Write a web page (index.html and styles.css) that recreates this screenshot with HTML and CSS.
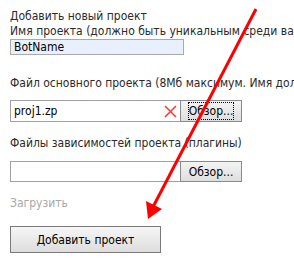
FILE: index.html
```html
<!DOCTYPE html>
<html lang="ru">
<head>
<meta charset="utf-8">
<link rel="stylesheet" href="styles.css">
</head>
<body>
<div class="page">
  <div class="form">
    <div class="line title">Добавить новый проект</div>
    <div class="line">Имя проекта (должно быть уникальным среди ваших ботов)</div>
    <div class="text-input name">BotName</div>
    <div class="line label-file">Файл основного проекта (8Мб максимум. Имя должно быть латиницей)</div>
    <div class="file-row">
      <div class="file-field">proj1.zp<svg class="clear" width="13" height="13" viewBox="0 0 13 13"><path d="M1 1 L12 12 M12 1 L1 12" stroke="#e8443a" stroke-width="1.6" fill="none"/></svg></div>
      <div class="browse focused"><span class="browse-label">Обзор...</span></div>
    </div>
    <div class="line label-deps">Файлы зависимостей проекта (плагины)</div>
    <div class="file-row second">
      <div class="file-field"></div>
      <div class="browse"><span class="browse-label">Обзор...</span></div>
    </div>
    <div class="line upload">Загрузить</div>
    <div class="submit">Добавить проект</div>
  </div>
  <svg class="arrow" width="294" height="268" viewBox="0 0 294 268">
    <line x1="256" y1="9" x2="153" y2="207" stroke="#ff0000" stroke-width="3"/>
    <polygon points="148,219 146,201 162,209" fill="#ff0000"/>
  </svg>
</div>
</body>
</html>
```
FILE: styles.css
```css
html, body {
  margin: 0;
  padding: 0;
  background: #ffffff;
}
body {
  width: 294px;
  height: 268px;
  overflow: hidden;
}
.page {
  position: relative;
  width: 294px;
  height: 268px;
  overflow: hidden;
}
.form {
  padding: 9px 0 0 10px;
  font-family: "DejaVu Sans Condensed", "DejaVu Sans", sans-serif;
  font-size: 12px;
  color: #2a2a2a;
  white-space: nowrap;
}
.line {
  height: 15px;
  line-height: 15px;
}
.text-input {
  box-sizing: border-box;
  width: 174px;
  height: 16px;
  margin-top: 0;
  border: 1px solid #a9a9a9;
  background: #e8f0fe;
  padding-left: 3px;
  line-height: 14px;
  color: #000;
}
.label-file {
  margin-top: 21px;
}
.file-row {
  display: flex;
  margin-top: 9px;
  height: 22px;
}
.file-row.second {
  margin-top: 10px;
  height: 21px;
}
.file-field {
  box-sizing: border-box;
  width: 170px;
  border: 1px solid #a0a0a0;
  border-right: none;
  display: flex;
  align-items: center;
  justify-content: space-between;
  padding: 0 3px 0 3px;
  color: #000;
}
.clear {
  display: block;
}
.browse {
  box-sizing: border-box;
  width: 62px;
  border: 1px solid #8a8a8a;
  background: linear-gradient(#f4f4f4, #dedede);
  display: flex;
  align-items: center;
  justify-content: center;
  color: #000;
}
.browse.focused .browse-label {
  outline: 1px dotted #000;
  padding: 1px 0;
}
.label-deps {
  margin-top: 14px;
}
.upload {
  margin-top: 14px;
  color: #a8a8a8;
}
.submit {
  box-sizing: border-box;
  width: 151px;
  height: 27px;
  margin-top: 15px;
  border: 1px solid #7a7a7a;
  background: linear-gradient(#f6f6f6, #dddddd);
  display: flex;
  align-items: center;
  justify-content: center;
  color: #000;
}
.arrow {
  position: absolute;
  left: 0;
  top: 0;
  pointer-events: none;
}
```
